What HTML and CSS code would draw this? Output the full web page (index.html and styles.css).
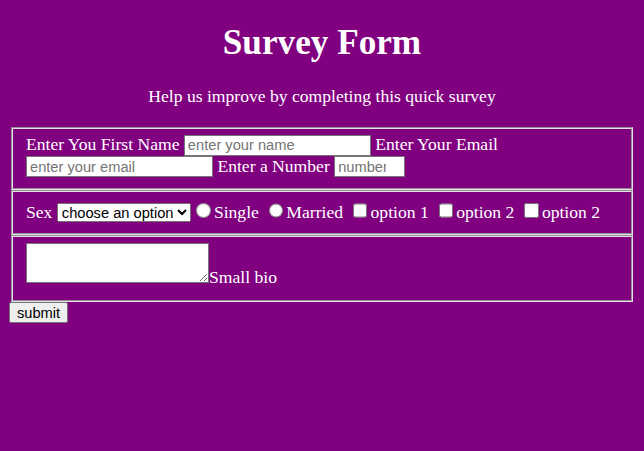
FILE: index.html
```html
<!DOCTYPE html>
<html lang="en">
<head>
<meta charset="utf-8">
<title>Survey Form</title>
<link rel="stylesheet" href="styles.css">
</head>
<body>
<h1 class="title" id="title">Survey Form</h1>
<p class="lead" id="description">Help us improve by completing this quick survey</p>
<form class="survey" id="survey-form">
  <fieldset class="group group-contact">
    <label>Enter You First Name <input type="text" class="field field-wide" placeholder="enter your name"></label>
    <label>Enter Your Email <input type="email" class="field field-wide" placeholder="enter your email"></label>
    <label>Enter a Number <input type="number" class="field field-num" placeholder="number"></label>
  </fieldset>
  <fieldset class="group group-choice">
    <label>Sex <select class="picker"><option>choose an option</option><option>Male</option><option>Female</option></select></label><label><input type="radio" name="status" class="tick">Single</label> <label><input type="radio" name="status" class="tick">Married</label> <label><input type="checkbox" class="tick">option 1</label> <label><input type="checkbox" class="tick">option 2</label> <label><input type="checkbox" class="tick">option 2</label>
  </fieldset>
  <fieldset class="group group-bio">
    <label><textarea class="bio"></textarea>Small bio</label>
  </fieldset>
  <button type="submit" class="submit-btn">submit</button>
</form>
</body>
</html>
```

FILE: styles.css
```css
html, body {
  background: #800080;
}

body {
  margin: 8px;
  color: #ffffff;
  font-family: "Liberation Serif", "Times New Roman", serif;
  font-size: 17.6px;
  line-height: 20px;
}

.title {
  margin: 15px 0 23px;
  font-size: 35.2px;
  line-height: 40px;
  font-weight: bold;
  text-align: center;
}

.lead {
  margin: 23px 0 21px;
  font-size: 17.6px;
  line-height: 20px;
  text-align: center;
}

.survey {
  margin: 0;
}

.group {
  margin: 0 3px;
  padding: 5px 13px 11px;
  border: 2px groove #e8e0e8;
}

.group-choice {
  padding-top: 8px;
  padding-bottom: 11px;
}

.group-bio {
  padding-top: 6px;
  padding-bottom: 13px;
}

.field {
  box-sizing: border-box;
  height: 21px;
  padding: 1px 3px;
  border: 1px solid #767676;
  background: #ffffff;
  color: #000000;
  font-family: "Liberation Sans", Arial, sans-serif;
  font-size: 14.67px;
  vertical-align: baseline;
}

.field::placeholder {
  color: #757575;
}

.field-wide {
  width: 187px;
}

.field-num {
  width: 71px;
}

.picker {
  box-sizing: border-box;
  width: 134px;
  height: 19px;
  color: #000000;
  font-family: "Liberation Sans", Arial, sans-serif;
  font-size: 14.67px;
}

.tick {
  width: 14.3px;
  height: 14.3px;
  margin: 3.3px 3.3px 0 5.5px;
}

.bio {
  box-sizing: border-box;
  width: 183px;
  height: 40px;
  margin: 0;
  border: 1px solid #767676;
  font-family: "Liberation Mono", monospace;
  font-size: 13px;
}

.submit-btn {
  box-sizing: border-box;
  width: 59px;
  height: 21px;
  margin: 0 0 0 1px;
  padding: 0 6px;
  border: 1px solid #767676;
  border-radius: 2px;
  background: #efefef;
  color: #000000;
  font-family: "Liberation Sans", Arial, sans-serif;
  font-size: 14.67px;
}
```
